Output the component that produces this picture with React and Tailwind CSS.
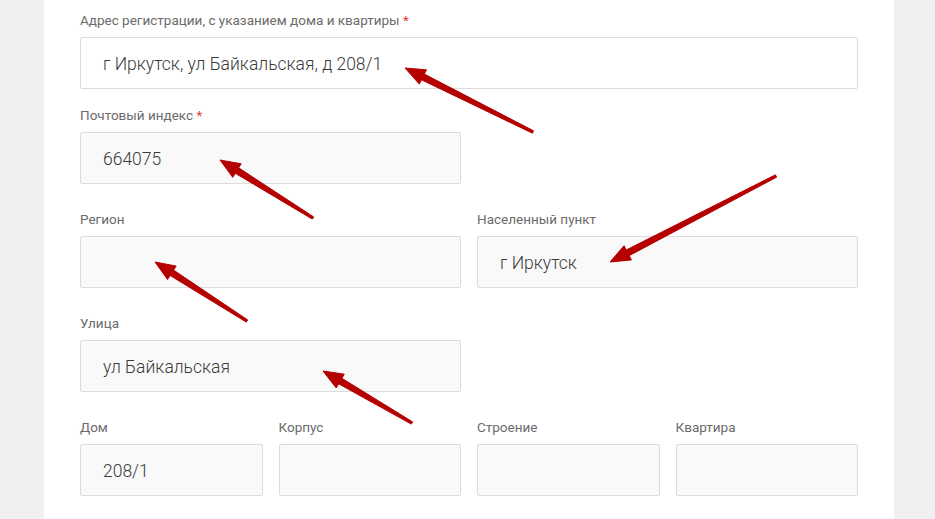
const arrows = [
  { tip: [405, 68], tail: [533, 132] },
  { tip: [220, 160], tail: [313, 218] },
  { tip: [610, 262], tail: [776, 176] },
  { tip: [155, 262], tail: [247, 321] },
  { tip: [323, 371], tail: [412, 423] },
]

function arrowPoints({ tip, tail }) {
  const dx = tip[0] - tail[0]
  const dy = tip[1] - tail[1]
  const len = Math.hypot(dx, dy)
  const ux = dx / len
  const uy = dy / len
  const nx = -uy
  const ny = ux
  const L = 20
  const W = 8
  const bx = tip[0] - ux * L
  const by = tip[1] - uy * L
  const p = (x, y, k) => `${x + nx * k},${y + ny * k}`
  return [
    p(tail[0], tail[1], 1.3),
    p(bx, by, 3.2),
    p(bx, by, W),
    `${tip[0]},${tip[1]}`,
    p(bx, by, -W),
    p(bx, by, -3.2),
    p(tail[0], tail[1], -1.3),
  ].join(' ')
}

function Field({ label, required, value, white }) {
  return (
    <div className="flex flex-col">
      <div className="text-[13.5px] leading-[16px] mb-[9px] text-[#6b6b6b] font-['Roboto',sans-serif]">
        {label}
        {required && <span className="text-[#e53935]"> *</span>}
      </div>
      <div
        className={`h-[52px] rounded-[2px] border border-[#dcdcdc] flex items-center pl-[22px] pt-[2px] text-[17.5px] font-light text-[#3a3a3a] font-['Roboto',sans-serif] ${
          white ? 'bg-white' : 'bg-[#f9f9f9]'
        }`}
      >
        {value}
      </div>
    </div>
  )
}

export default function App() {
  return (
    <div className="w-[935px] h-[519px] bg-[#f0f0f0] relative overflow-hidden">
      <div className="ml-[44px] w-[850px] h-full bg-white pl-[36px] pr-[36px] pt-[12px] flex flex-col gap-[27px]">
        <div className="-mb-[9px]">
          <Field label="Адрес регистрации, с указанием дома и квартиры" required value="г Иркутск, ул Байкальская, д 208/1" white />
        </div>
        <div className="grid grid-cols-2 gap-x-[16px]">
          <Field label="Почтовый индекс" required value="664075" />
        </div>
        <div className="grid grid-cols-2 gap-x-[16px]">
          <Field label="Регион" value="" />
          <Field label="Населенный пункт" value="г Иркутск" />
        </div>
        <div className="grid grid-cols-2 gap-x-[16px]">
          <Field label="Улица" value="ул Байкальская" />
        </div>
        <div className="grid grid-cols-4 gap-x-[16px]">
          <Field label="Дом" value="208/1" />
          <Field label="Корпус" value="" />
          <Field label="Строение" value="" />
          <Field label="Квартира" value="" />
        </div>
      </div>
      <svg className="absolute inset-0 pointer-events-none" width="935" height="519">
        {arrows.map((a, i) => (
          <polygon key={i} points={arrowPoints(a)} fill="#b50000" stroke="#b50000" strokeWidth="1" strokeLinejoin="round" />
        ))}
      </svg>
    </div>
  )
}
